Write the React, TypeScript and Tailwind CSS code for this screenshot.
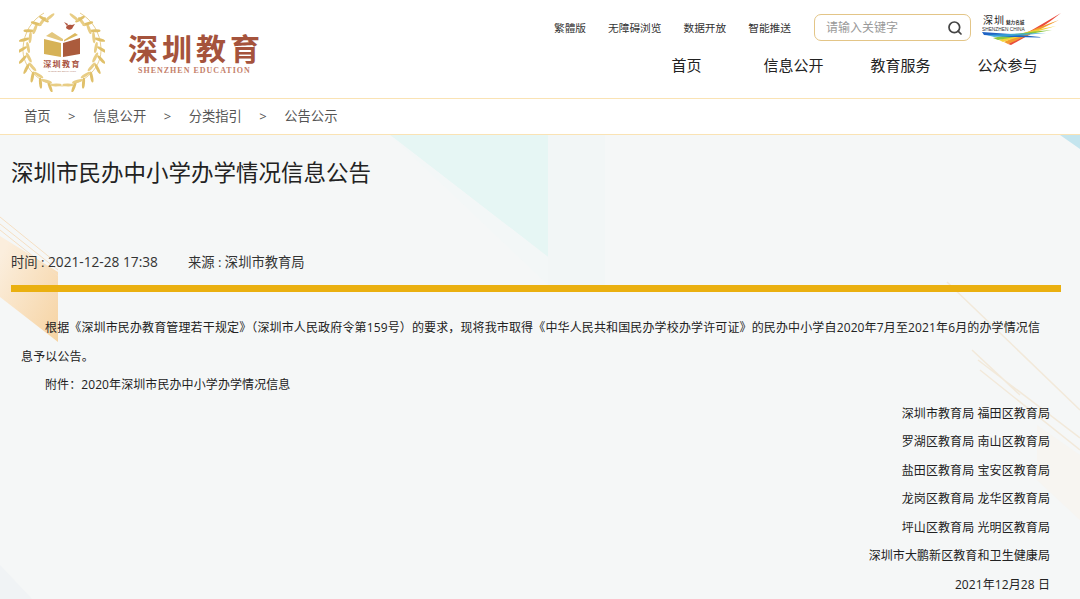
import React from 'react';
import { Search } from 'lucide-react';

const FONT = '"Open Sans", "Noto Sans CJK SC", sans-serif';

const topLinks = ['繁體版', '无障碍浏览', '数据开放', '智能推送'];
const navItems = ['首页', '信息公开', '教育服务', '公众参与'];
const crumbs = ['首页', '信息公开', '分类指引', '公告公示'];
const signers = [
  '深圳市教育局 福田区教育局',
  '罗湖区教育局 南山区教育局',
  '盐田区教育局 宝安区教育局',
  '龙岗区教育局 龙华区教育局',
  '坪山区教育局 光明区教育局',
  '深圳市大鹏新区教育和卫生健康局',
  '2021年12月28 日',
];

// angle from bottom centre, one half of the wreath; the other half is mirrored
const leafAngles = [14, 30, 46, 62, 78, 94, 110, 126, 142, 156];

const Wreath: React.FC = () => (
  <svg width="86" height="82" viewBox="0 0 86 82" className="block">
    {[1, -1].map((side) => (
      <g key={side} transform={side === -1 ? 'translate(86 0) scale(-1 1)' : undefined}>
        <path d="M43 76 C18 74 3 56 4 38 C5 22 13 10 25 3" fill="none" stroke="#dcb95f" strokeWidth="0.7" />
        {leafAngles.map((a) => {
          const r = (a * Math.PI) / 180;
          const x = 43 - 37 * Math.sin(r);
          const y = 41 + 36 * Math.cos(r);
          return (
            <g key={a}>
              <ellipse cx={x - 3} cy={y + 1} rx="5.6" ry="1.5" fill="#e0c06a" transform={`rotate(${a + 55} ${x - 3} ${y + 1})`} />
              <ellipse cx={x + 3} cy={y - 1} rx="5.6" ry="1.5" fill="#e8cd85" transform={`rotate(${a - 15} ${x + 3} ${y - 1})`} />
            </g>
          );
        })}
      </g>
    ))}
    <path d="M25 29 L42 33 L42 47 L25 44 Z" fill="#d6b257" />
    <path d="M44 33 L61 28 L61 44 L44 47 Z" fill="#ab5b3c" />
    <path d="M27 26 L42 31 L44 31 L44 29 L33 22 Z" fill="#e3c77e" />
    <path d="M45 30 L56 23 L59 25 L45 31.5 Z" fill="#dcb95f" />
    <path d="M47 18 C47 15 50 14 53 15 L56 14 L54 17 C53 20 50 21 47 18 Z" fill="#b0553f" />
    <path d="M48 16 L45 12 L49 14 Z" fill="#b0553f" />
    <text x="43" y="57" textAnchor="middle" fontSize="8" fontWeight="700" fill="#a9543f" fontFamily="Noto Sans CJK SC" letterSpacing="1.4">深圳教育</text>
    <text x="43" y="61.5" textAnchor="middle" fontSize="2.4" fill="#b98a78" fontFamily="Liberation Sans">SHENZHEN EDUCATION</text>
  </svg>
);

const CityLogo: React.FC = () => (
  <svg width="79" height="34" viewBox="0 0 79 34" className="block">
    <text x="1" y="12" fontSize="10" fill="#222" fontFamily="Noto Sans CJK SC" letterSpacing="1">深圳</text>
    <text x="24" y="12" fontSize="4.6" fontWeight="700" fill="#333" fontFamily="Noto Sans CJK SC">魅力名城</text>
    <text x="0" y="18.5" fontSize="4.8" fill="#333" fontFamily="Liberation Sans">SHENZHEN CHINA</text>
    <path d="M26 32 Q50 18 79 1 Q58 18 29 33 Z" fill="#ea4b3c" />
    <path d="M22 30 Q46 19 77 8 Q52 21 26 32 Z" fill="#f39a2e" />
    <path d="M17 28 Q44 19 74 14 Q46 22 21 30 Z" fill="#f4d23a" />
    <path d="M11 26 Q40 20 70 18 Q42 23 16 28 Z" fill="#8cc63f" />
    <path d="M0 20 Q28 22 58 25 Q60 25.5 56 25.5 Q26 25 2 23 Z" fill="#1f63c4" />
    <path d="M5 23 Q30 21 64 21 Q34 24 12 25 Z" fill="#3aa7d8" opacity="0.85" />
  </svg>
);

const Backdrop: React.FC = () => (
  <svg width="1080" height="465" viewBox="0 135 1080 465" className="absolute left-0 top-0">
    <defs>
      <linearGradient id="warm" x1="0" y1="0" x2="1" y2="1">
        <stop offset="0.1" stopColor="#fbeedd" />
        <stop offset="1" stopColor="#f6d3a2" />
      </linearGradient>
    </defs>
    <path d="M548 135 H605 V285 H548 Z" fill="#f2f6f6" />
    <path d="M390 135 H548 V257 Z" fill="#e6f6f4" />
    <path d="M390 135 L548 257 V285 Z" fill="#f3f7f7" />
    <path d="M1060 135 H1080 V149 Z" fill="#c4e5ee" />
    <path d="M0 236 L58 272 V342 L0 297 Z" fill="url(#warm)" />
    <path d="M0 217 L58 264 M0 224 L58 270 M0 230 L58 276" stroke="#f5dfc3" strokeWidth="1" />
    <path d="M947 282 L1080 410 M978 360 L1080 438 M980 370 L1080 450 M972 350 L1020 395" stroke="#f2e9da" strokeWidth="1.5" fill="none" />
    <path d="M1037 425 L1080 455 V520 L1037 480 Z" fill="#f7f5f1" />
    <path d="M0 565 L32 599 H0 Z" fill="#f0f3f5" />
  </svg>
);

export default function App() {
  return (
    <div className="h-[599px] overflow-hidden bg-white text-[#222]" style={{ fontFamily: FONT }}>
      <header className="flex h-[98px] justify-between pl-[19px] pr-[19px]">
        <div className="flex items-start pt-[10px]">
          <Wreath />
          <div className="ml-[23px] mt-[19px] flex flex-col items-start">
            <span className="text-[30px] font-bold leading-[36px] tracking-[4px] text-[#a5533c]" style={{ fontFamily: '"Noto Sans CJK SC", sans-serif' }}>深圳教育</span>
            <span className="ml-[10px] mt-[1px] text-[8px] font-bold leading-[10px] tracking-[1px] text-[#c4806a]" style={{ fontFamily: '"Liberation Serif", serif' }}>SHENZHEN EDUCATION</span>
          </div>
        </div>
        <div className="flex flex-col items-end">
          <div className="flex items-start pt-[14px]">
            <div className="flex h-[27px] gap-[22px] text-[10.7px] leading-[28px] text-[#333]">
              {topLinks.map((t) => (
                <a key={t}>{t}</a>
              ))}
            </div>
            <div className="ml-[23px] flex h-[27px] w-[157px] items-center justify-between rounded-[7px] border border-[#e3c587] pl-[11px] pr-[7px]">
              <span className="text-[12px] text-[#999]">请输入关键字</span>
              <Search className="h-[16px] w-[16px] text-[#444]" strokeWidth={2.6} />
            </div>
            <div className="-mt-[2px] ml-[11px]">
              <CityLogo />
            </div>
          </div>
          <nav className="-mt-[1px] flex">
            {navItems.map((t) => (
              <a key={t} className="w-[107px] text-center text-[15px] leading-[40px] text-[#222]">{t}</a>
            ))}
          </nav>
        </div>
      </header>

      <div className="flex h-[37px] items-center gap-[17.5px] border-y border-[#fae3b4] pl-[24px] text-[13.3px] text-[#555]">
        {crumbs.map((c, i) => (
          <React.Fragment key={c}>
            {i > 0 && <span className="text-[13px]">&gt;</span>}
            <a>{c}</a>
          </React.Fragment>
        ))}
      </div>

      <main className="relative h-[465px] bg-[#f5f7f7]">
        <Backdrop />
        <div className="relative pl-[11px] pr-[19px]">
          <h1 className="pt-[20px] text-[22.5px] font-normal leading-[36px] text-[#222]">深圳市民办中小学办学情况信息公告</h1>
          <div className="mt-[57px] flex gap-[30px] text-[13.3px] leading-[28px] text-[#333]">
            <span>时间 : <span className="text-[13.7px]">2021-12-28 17:38</span></span>
            <span>来源 : 深圳市教育局</span>
          </div>
          <div className="mt-[9px] h-[7px] bg-[#eab010]" />
          <article className="pr-[11px] pt-[22px] text-[12px] leading-[28.5px] tracking-[0.09px] text-[#222]">
            <p className="pl-[10px] indent-[24px] tracking-[0.135px]">根据《深圳市民办教育管理若干规定》（深圳市人民政府令第159号）的要求，现将我市取得《中华人民共和国民办学校办学许可证》的民办中小学自2020年7月至2021年6月的办学情况信息予以公告。</p>
            <p className="pl-[10px] indent-[24px]">附件：2020年深圳市民办中小学办学情况信息</p>
            <div className="text-right">
              {signers.map((s) => (
                <p key={s}>{s}</p>
              ))}
            </div>
          </article>
        </div>
      </main>
    </div>
  );
}
